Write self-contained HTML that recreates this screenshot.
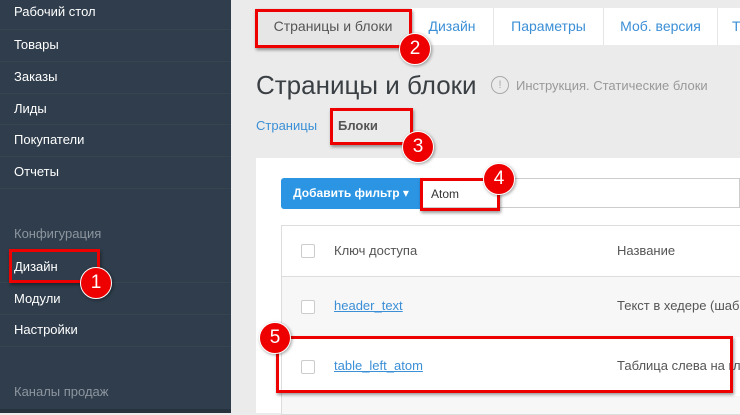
<!DOCTYPE html>
<html><head><meta charset="utf-8"><style>
body{margin:0;width:740px;height:413px;overflow:hidden;background:#ebebeb;font-family:"Liberation Sans","DejaVu Sans",sans-serif;position:relative}
.a{position:absolute}
.sb{left:0;top:0;width:231px;height:413px;background:#2f3d4c}
.it{position:absolute;left:14px;color:#fff;font-size:13px}
.sep{position:absolute;left:0;width:231px;height:1px;background:#36444f}
.gr{color:#8d969f}
.red{position:absolute;border:3px solid #e00;box-shadow:1px 2px 3px rgba(0,0,0,.4)}
.num{position:absolute;width:30px;height:30px;border-radius:50%;background:#e00;color:#fff;font-size:19px;text-align:center;line-height:30px;border:1px solid #fff;box-shadow:1px 1px 3px rgba(0,0,0,.4)}
.tab{position:absolute;top:8px;height:37px;line-height:37px;color:#3b8fd6;font-size:14px;background:#fff;border-right:1px solid #e6e6e6;text-align:center}
.cb{position:absolute;left:301px;width:12px;height:12px;border:1px solid #ccc;border-radius:2px;background:#fff}
.lnk{position:absolute;left:334px;color:#3b8fd6;text-decoration:underline;font-size:13px}
.nm{position:absolute;left:617px;color:#555;font-size:13px;white-space:nowrap}
</style></head><body>
<div class="a sb"></div>
<div class="it" style="top:4px">Рабочий стол</div><div class="sep" style="top:29px"></div>
<div class="it" style="top:37px">Товары</div><div class="sep" style="top:61px"></div>
<div class="it" style="top:69px">Заказы</div><div class="sep" style="top:93px"></div>
<div class="it" style="top:101px">Лиды</div><div class="sep" style="top:124px"></div>
<div class="it" style="top:132px">Покупатели</div><div class="sep" style="top:156px"></div>
<div class="it" style="top:164px">Отчеты</div><div class="sep" style="top:188px"></div>
<div class="it gr" style="top:226px">Конфигурация</div>
<div class="it" style="top:259px">Дизайн</div><div class="sep" style="top:282px"></div>
<div class="it" style="top:291px">Модули</div><div class="sep" style="top:314px"></div>
<div class="it" style="top:322px">Настройки</div><div class="sep" style="top:346px"></div>
<div class="it gr" style="top:384px">Каналы продаж</div>
<div class="a" style="left:0;top:409px;width:231px;height:4px;background:#26323e"></div>

<div class="tab" style="left:256px;width:154px;background:#e6e6e6;color:#555">Страницы и блоки</div>
<div class="tab" style="left:411px;width:82px">Дизайн</div>
<div class="tab" style="left:494px;width:109px">Параметры</div>
<div class="tab" style="left:604px;width:113px">Моб. версия</div>
<div class="tab" style="left:718px;width:30px;text-align:left;padding-left:14px">Т</div>

<div class="a" style="left:256px;top:70px;font-size:26px;color:#3a3f44">Страницы и блоки</div>
<div class="a" style="left:491px;top:76px;width:16px;height:16px;border:1.5px solid #aaa;border-radius:50%;color:#aaa;font-size:11px;text-align:center;line-height:16px">!</div>
<div class="a" style="left:516px;top:78px;font-size:13px;color:#999">Инструкция. Статические блоки</div>
<div class="a" style="left:256px;top:118px;font-size:13px;color:#3b8fd6">Страницы</div>
<div class="a" style="left:338px;top:118px;font-size:13px;color:#555;font-weight:bold">Блоки</div>

<div class="a" style="left:256px;top:158px;width:484px;height:255px;background:#fff"></div>
<div class="a" style="left:281px;top:178px;width:140px;height:31px;background:#2b95e3;border-radius:3px 0 0 3px;color:#fff;font-size:12px;font-weight:bold;line-height:31px;text-align:center">Добавить фильтр ▾</div>
<div class="a" style="left:421px;top:178px;width:319px;height:30px;border:1px solid #ccc;border-left:none;box-sizing:border-box"></div>
<div class="a" style="left:431px;top:187px;font-size:12px;color:#333">Atom</div>

<div class="a" style="left:281px;top:225px;width:459px;height:188px;border:1px solid #ddd;border-right:none;background:#f7f7f7"></div>
<div class="a" style="left:282px;top:226px;width:458px;height:50px;background:#fff;border-bottom:1px solid #ddd"></div>
<div class="a" style="left:282px;top:337px;width:458px;height:59px;background:#fff"></div>
<div class="cb" style="top:244px"></div>
<div class="a" style="left:334px;top:243px;font-size:13px;color:#555">Ключ доступа</div>
<div class="a" style="left:617px;top:243px;font-size:13px;color:#555">Название</div>
<div class="cb" style="top:300px"></div>
<div class="lnk" style="top:298px">header_text</div>
<div class="nm" style="top:298px">Текст в хедере (шаб</div>
<div class="cb" style="top:360px"></div>
<div class="lnk" style="top:358px">table_left_atom</div>
<div class="nm" style="top:358px">Таблица слева на гл</div>

<div class="red" style="left:255px;top:9px;width:151px;height:33px"></div>
<div class="num" style="left:399px;top:33px">2</div>
<div class="red" style="left:330px;top:108px;width:77px;height:31px"></div>
<div class="num" style="left:402px;top:131px">3</div>
<div class="red" style="left:420px;top:178px;width:74px;height:27px"></div>
<div class="num" style="left:483px;top:163px">4</div>
<div class="red" style="left:9px;top:249px;width:85px;height:28px"></div>
<div class="num" style="left:80px;top:267px">1</div>
<div class="red" style="left:276px;top:336px;width:451px;height:51px"></div>
<div class="num" style="left:259px;top:322px">5</div>
</body></html>
